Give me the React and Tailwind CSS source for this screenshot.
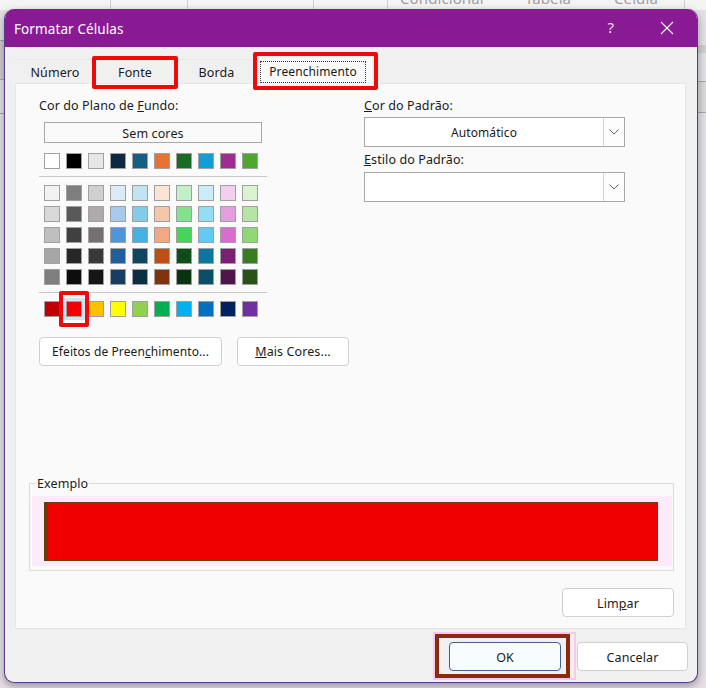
const FONT = { fontFamily: '"Noto Sans", "Open Sans", sans-serif' };

const themeRow = ["#ffffff","#000000","#e7e6e6","#0e2841","#156082","#e97132","#196b24","#0f9ed5","#a02b93","#4ea72e"];
const shades = [
  ["#f2f2f2","#7f7f7f","#d0cece","#dce9f7","#c1e4f5","#fbe3d6","#c1f0c8","#caedfb","#f2ceef","#d9f2d0"],
  ["#d9d9d9","#595959","#aeaaaa","#a6c9ec","#83cbeb","#f6c6ac","#83e28e","#95dcf7","#e59edd","#b4e5a2"],
  ["#bfbfbf","#404040","#757070","#4e95d9","#45b0e1","#f1a983","#47d45a","#61cbf3","#d86dcd","#8ed973"],
  ["#a6a6a6","#262626","#3a3838","#215f9a","#0f4761","#c04f15","#0f4d19","#0b76a0","#7a2070","#3a7c22"],
  ["#7f7f7f","#0d0d0d","#171616","#163e64","#0a2f41","#80340e","#0a3410","#074f6a","#501549","#275317"],
];
const standard = ["#c00000","#f00000","#ffc000","#ffff00","#92d050","#00b050","#00b0f0","#0070c0","#002060","#7030a0"];

function SwatchRow({ colors, selected = -1 }) {
  return (
    <div className="grid grid-cols-[repeat(10,16px)] gap-x-[6px]">
      {colors.map((c, i) => (
        <div
          key={i}
          className={i === selected
            ? "relative w-4 h-4 border border-[#a0a0a0] shadow-[0_0_0_3px_#cfe5f3]"
            : "w-4 h-4 border border-[#a0a0a0]"}
          style={{ backgroundColor: c }}
        />
      ))}
    </div>
  );
}

function Btn({ primary = false, className = "", children }) {
  const tone = primary ? "bg-[#f6fcff] border-[#44608f]" : "bg-white border-[#d0d0d0]";
  return (
    <div className={"flex items-center justify-center h-[29px] border rounded-[4px] text-[#1a1a1a] " + tone + " " + className}>
      <span>{children}</span>
    </div>
  );
}

function Select({ value, className = "" }) {
  return (
    <div className={"flex w-[261px] h-[30px] bg-white border border-[#a8a8a8] " + className}>
      <div className="flex-1 flex items-center justify-center pt-px text-[12px] text-[#1a1a1a]">{value}</div>
      <div className="w-[21px] flex items-center justify-center bg-[#fdfdfd] border-l border-[#d4d4d4]">
        <svg width="10" height="6" viewBox="0 0 10 6" fill="none" stroke="#666" strokeWidth="1"><path d="M0.5 0.5 L5 5 L9.5 0.5" /></svg>
      </div>
    </div>
  );
}

function Tab({ className = "", children }) {
  return (
    <div className={"flex items-center justify-center h-[24px] pt-[2px] border-t border-[#e8e8e8] text-[#1a1a1a] " + className}>
      {children}
    </div>
  );
}

export default function App() {
  return (
    <div className="relative w-[706px] h-[688px] overflow-hidden bg-[#e4e0e6] pl-1 pt-[9px] text-[12.5px] leading-4 tracking-[0.1px]" style={FONT}>
      {/* workbook behind the dialog */}
      <div className="absolute inset-x-0 top-0 h-[10px] bg-[#f4f4f4] text-[#a0a0a0] text-[15px] leading-none">
        <span className="absolute left-[400px] -top-[9px]">Condicional</span>
        <span className="absolute left-[525px] -top-[9px]">Tabela</span>
        <span className="absolute left-[614px] -top-[9px]">Célula</span>
        <div className="absolute left-[110px] top-0 h-[10px] w-px bg-[#d0d0d0]" />
        <div className="absolute left-[187px] top-0 h-[10px] w-px bg-[#d0d0d0]" />
        <div className="absolute left-[313px] top-0 h-[10px] w-px bg-[#d0d0d0]" />
        <div className="absolute left-[387px] top-0 h-[10px] w-px bg-[#d0d0d0]" />
        <div className="absolute left-[684px] top-0 h-[10px] w-px bg-[#d0d0d0]" />
      </div>
      <div className="absolute right-0 top-[45px] w-[8px] h-[8px] bg-[#cfcfcf]" />
      <div className="absolute right-0 top-[81px] w-[8px] h-[32px] bg-[#d9d9d9] border-y border-[#a8a8a8]" />
      <div className="absolute left-0 top-[40px] w-[4px] h-[40px] bg-[#d0ccd2] border-y border-[#a8a8a8]" />
      <div className="absolute left-0 top-[113px] w-[4px] h-px bg-[#a8a8a8]" />

      {/* dialog window */}
      <div className="relative w-[694px] h-[674px] rounded-[10px] overflow-hidden bg-[#f0f0f0] border-x border-b border-[#5b3a8c] shadow-[0_3px_8px_rgba(0,0,0,0.35)]">
        <div className="-mx-px flex items-center h-[38px] bg-[#8a1a94] text-white pl-[10px] pr-[24px]">
          <span className="flex-1 pt-[3px] text-[13.5px] leading-none">Formatar Células</span>
          <span className="text-[15px] -mt-[2px] mr-[46px] text-[#f0dff1]">?</span>
          <svg width="14" height="14" viewBox="0 0 14 14" fill="none" stroke="#ffffff" strokeWidth="1.1"><path d="M1 1 L13 13 M13 1 L1 13" /></svg>
        </div>

        {/* tabs */}
        <div className="flex items-end h-[36px] pl-[10px]">
          <Tab className="w-[80px]">Número</Tab>
          <Tab className="w-[80px]">Fonte</Tab>
          <Tab className="w-[83px]">Borda</Tab>
          <div className="flex items-start w-[114px] h-[26px] bg-[#fafafa] pt-[3px] pl-[2px] -mb-px z-10">
            <div className="flex items-center justify-center w-[106px] h-[22px] border border-dotted border-[#333] text-[12px] text-[#1a1a1a]">Preenchimento</div>
          </div>
        </div>

        {/* panel */}
        <div className="ml-[10px] w-[671px] h-[546px] bg-[#fafafa] border border-[#e6e6e6] text-[#1a1a1a]">
          <div className="flex pt-[14px] pl-[23px]">
            <div className="w-[310px]">
              <div>Cor do Plano de <u>F</u>undo:</div>
              <div className="ml-[5px] mt-[8px] w-[218px] h-[21px] pt-[2px] flex items-center justify-center bg-[#fafafa] border border-[#a8a8a8]">Sem cores</div>
              <div className="ml-[5px] mt-[10px]"><SwatchRow colors={themeRow} /></div>
              <div className="mt-[7px] w-[228px] h-px bg-[#c8c8c8]" />
              <div className="ml-[5px] mt-[8px] flex flex-col gap-y-[5px]">
                {shades.map((row, i) => <SwatchRow key={i} colors={row} />)}
              </div>
              <div className="mt-[7px] w-[228px] h-px bg-[#c8c8c8]" />
              <div className="ml-[5px] mt-[8px]"><SwatchRow colors={standard} selected={1} /></div>
              <div className="mt-[20px] flex gap-x-[15px]">
                <Btn className="w-[183px] pt-px text-[12px]">Efeitos de Preen<u>c</u>himento...</Btn>
                <Btn className="w-[112px] pt-px"><u>M</u>ais Cores...</Btn>
              </div>
            </div>
            <div className="ml-[15px]">
              <div><u>C</u>or do Padrão:</div>
              <Select value="Automático" className="mt-[3px]" />
              <div className="mt-[5px]"><u>E</u>stilo do Padrão:</div>
              <Select value="" className="mt-[4px]" />
            </div>
          </div>

          <fieldset className="ml-[13px] mt-[109px] w-[645px] h-[96px] border border-[#dcdcdc]">
            <legend className="ml-[6px] px-px translate-y-px text-[#1a1a1a]">Exemplo</legend>
            <div className="ml-[2px] mt-[5px] w-[640px] h-[70px] bg-[#fdeafa] pl-[12px] pt-[6px]">
              <div className="w-[614px] h-[59px] bg-[#f00000] border border-l-4 border-[#6b3d0a]" />
            </div>
          </fieldset>

          <div className="flex justify-end pr-[11px] mt-[17px]">
            <Btn className="w-[112px] pt-[2px]">Lim<u>p</u>ar</Btn>
          </div>
        </div>

        {/* footer */}
        <div className="flex justify-end gap-x-4 pt-[13px] pr-[9px]">
          <Btn primary className="w-[112px] pt-[2px]">OK</Btn>
          <Btn className="w-[111px] pt-[2px]">Cancelar</Btn>
        </div>
      </div>

      {/* annotations */}
      <div className="absolute left-[92px] top-[56px] w-[86px] h-[33px] border-4 border-[#ee0a0a] rounded-[2px]" />
      <div className="absolute left-[253px] top-[52px] w-[125px] h-[38px] border-4 border-[#ee0a0a] rounded-[2px]" />
      <div className="absolute left-[59px] top-[291px] w-[30px] h-[36px] border-4 border-[#ee0a0a] rounded-[2px]" />
      <div className="absolute left-[433px] top-[632px] w-[143px] h-[48px] border-2 border-[#fdc8f0]">
        <div className="absolute left-0 top-0 w-[135px] h-[44px] border-4 border-[#8a2a10]" />
      </div>
    </div>
  );
}
